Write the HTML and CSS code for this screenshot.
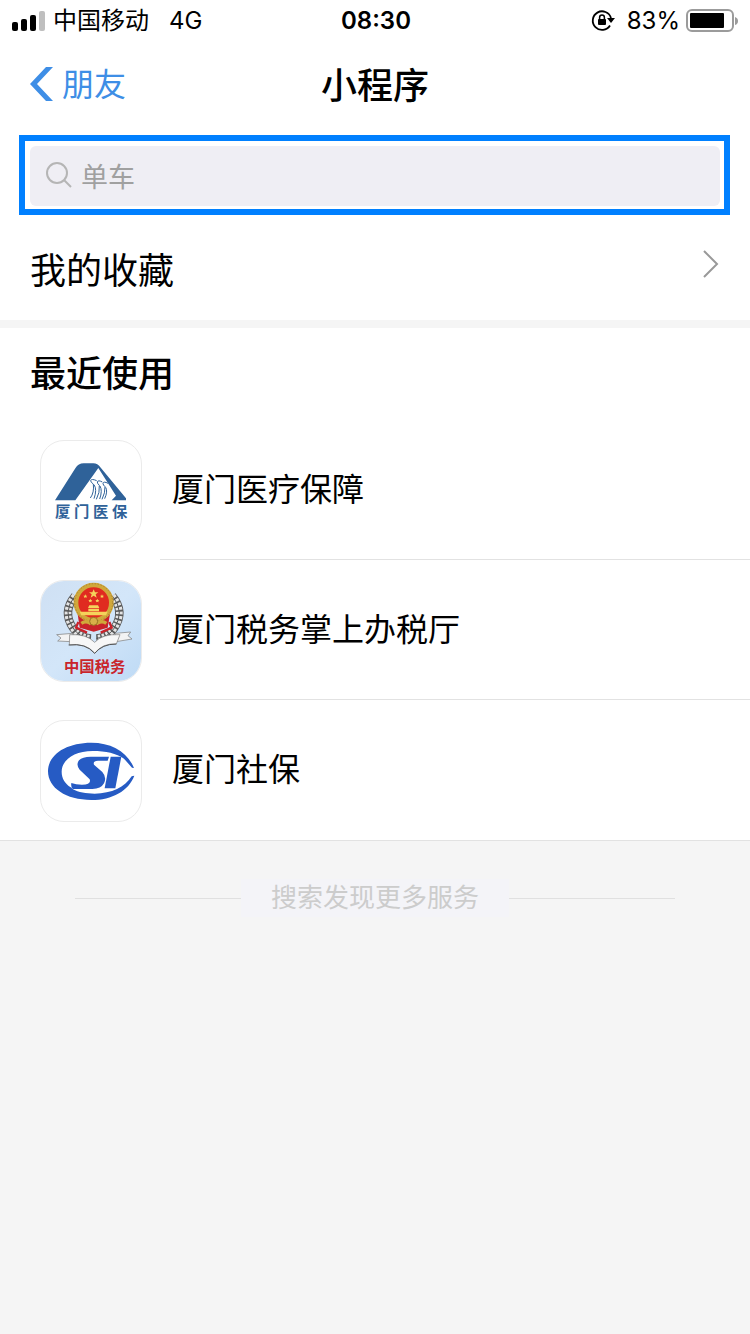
FILE: index.html
```html
<!DOCTYPE html>
<html lang="zh-CN">

<head>
    <meta charset="UTF-8">
    <meta name="viewport" content="width=device-width, initial-scale=1.0">
    <title>小程序</title>
    <link rel="stylesheet" href="styles.css">
</head>

<body>
    <div class="status-bar">
        <div class="status-left">
            <svg class="signal" viewBox="0 0 33 20" aria-hidden="true">
                <rect x="0" y="11" width="6" height="9" rx="2" />
                <rect x="9" y="8" width="6" height="12" rx="2" />
                <rect x="18" y="4" width="6" height="16" rx="2" />
                <rect x="27" y="0" width="6" height="20" rx="2" fill="#bfbfbf" />
            </svg>
            <span>中国移动</span>
            <span class="network">4G</span>
        </div>
        <span class="time">08:30</span>
        <div class="status-right">
            <svg class="lock" viewBox="0 0 24 24" aria-hidden="true">
                <path d="M19 16.500A9.300 9.300 0 1 1 20 9" fill="none" stroke="#000" stroke-width="1.800" />
                <path d="M16 9h8l-4 5z" />
                <rect x="7" y="10" width="8" height="6" rx="1" />
                <path d="M8.600 11V8.500a2.400 2.400 0 0 1 4.800 0v2.500" fill="none" stroke="#000" stroke-width="1.500" />
            </svg>
            <span>83%</span>
            <svg class="battery" viewBox="0 0 54 24" aria-hidden="true">
                <rect x="1" y="1" width="46" height="21" rx="5" fill="none" stroke="#9b9b9b" stroke-width="2" />
                <rect x="4" y="4" width="34" height="15" rx="1" />
                <path d="M49 8q3 1 3 4t-3 4z" fill="#9b9b9b" />
            </svg>
        </div>
    </div>

    <header class="nav">
        <a class="back" href="#">
            <svg viewBox="0 0 24 34" aria-hidden="true">
                <path d="M16 0h7L7 17l16 17h-7L0 17z" fill="#3e8ee6" />
            </svg>
            <span>朋友</span>
        </a>
        <h1>小程序</h1>
    </header>

    <form class="search" role="search">
        <label class="search-box">
            <svg viewBox="0 0 28 28" aria-hidden="true">
                <circle cx="12" cy="12" r="10" />
                <path d="M19 19l7 7" />
            </svg>
            <input type="search" placeholder="单车" aria-label="搜索">
        </label>
    </form>

    <a class="favorites" href="#">
        <span>我的收藏</span>
        <svg viewBox="0 0 18 30" aria-hidden="true">
            <path d="M2 2l13 13L2 28" />
        </svg>
    </a>

    <section class="recent">
        <h2>最近使用</h2>
        <ul>
            <li>
                <a href="#">
                    <svg class="app-icon" viewBox="33 33 300 300" aria-hidden="true">
                        <path d="M75 211l61-96q9-15 25-15h29q13 0 21 12l77 93v6h-43l13-14-53-83-69 97z" fill="#2f6299" />
                        <g fill="none" stroke="#2f6299" stroke-width="3">
                            <path d="M200 152q-16-7-18 0 0 5 8 10 3 26-9 42" />
                            <path d="M217 156q-13-7-15 0 0 5 6 10 2 22-9 42" />
                            <path d="M234 160q-13-7-15 0 0 5 6 10 1 18-9 38" />
                            <path d="M192 164q10 14 0 42M210 168q8 14-1 39M227 172q7 12-3 34" />
                        </g>
                        <text class="logo-medical" x="98" y="260">厦</text>
                        <text class="logo-medical" x="155" y="260">门</text>
                        <text class="logo-medical" x="212" y="260">医</text>
                        <text class="logo-medical" x="269" y="260">保</text>
                    </svg>
                    <span>厦门医疗保障</span>
                </a>
            </li>
            <li>
                <a href="#">
                    <svg class="app-icon" viewBox="33 33 300 300" aria-hidden="true">
                        <defs>
                            <linearGradient id="sky" x1="0" y1="0" x2="1" y2="1">
                                <stop offset="0" stop-color="#cfe0f3" />
                                <stop offset="0.500" stop-color="#d3e6f9" />
                                <stop offset="1" stop-color="#bedaf5" />
                            </linearGradient>
                        </defs>
                        <rect x="30" y="30" width="306" height="306" fill="url(#sky)" />
                        <!-- wheat wreath -->
                        <g fill="none">
                            <path d="M135 78Q96 125 129 174q19 29 54 31M247 78q39 47 6 96-19 29-54 31" stroke="#5c5c5c" stroke-width="25" />
                            <path d="M135 78Q96 125 129 174q19 29 54 31M247 78q39 47 6 96-19 29-54 31" stroke="#e4e4e4" stroke-width="20" stroke-dasharray="8 5" />
                            <path d="M135 78Q96 125 129 174q19 29 54 31M247 78q39 47 6 96-19 29-54 31" stroke="#555" stroke-width="3" />
                        </g>
                        <!-- national emblem -->
                        <path d="M143 132h97l-7 41-42 12-42-12z" fill="#c9222a" />
                        <circle cx="191" cy="98" r="53" fill="#e02b20" stroke="#d0a83b" stroke-width="14" />
                        <circle cx="191" cy="98" r="57" fill="none" stroke="#a88233" stroke-width="3" stroke-dasharray="4 5" />
                        <path d="M191 58l4 9h10l-8 6 3 10-9-6-9 6 3-10-8-6h10z" fill="#f5d35b" />
                        <g fill="#f5d35b">
                            <path d="M166 73l2 4h4l-3 3 1 4-4-2-4 2 1-4-3-3h4z" />
                            <path d="M216 73l2 4h4l-3 3 1 4-4-2-4 2 1-4-3-3h4z" />
                            <path d="M181 86l2 4h4l-3 3 1 4-4-2-4 2 1-4-3-3h4z" />
                            <path d="M202 86l2 4h4l-3 3 1 4-4-2-4 2 1-4-3-3h4z" />
                            <path d="M178 106h26l4 8h-34z" />
                            <path d="M175 116h32v8h-32z" />
                            <path d="M149 125h84l-5 11h-74z" />
                        </g>
                        <path d="M154 160q14-9 25-1 12-14 24 0 14-8 26 1" fill="none" stroke="#d0a83b" stroke-width="10" />
                        <circle cx="191" cy="154" r="12" fill="#d8b049" stroke="#987322" stroke-width="3" />
                        <path d="M145 156l-7 17 33 15M238 156l7 17-33 15" fill="none" stroke="#c9222a" stroke-width="7" />
                        <!-- ribbon -->
                        <g stroke="#777" stroke-width="2">
                            <path d="M128 190l-48 4 13 10-10 9 40 2zM256 190l46-4-8 11 12 10-48 8z" fill="#f3f3f3" />
                            <path d="M119 194q50-3 75 23 23-26 76-23l-11 28q-42-3-65 28-22-31-76-25z" fill="#f7f7f7" />
                            <path d="M116 225q50-7 78 25 23-28 65-28" fill="none" stroke="#555" stroke-width="3" />
                        </g>
                        <text class="logo-tax" x="194" y="307">中国税务</text>
                    </svg>
                    <span>厦门税务掌上办税厅</span>
                </a>
            </li>
            <li>
                <a href="#">
                    <svg class="app-icon" viewBox="33 33 300 300" aria-hidden="true">
                        <g fill="#265bc4">
                            <path d="M312 174C292 125 244 98 184 98 108 98 54 134 54 184s54 86 130 86c63 0 112-28 129-73l-8 2c-20 32-60 52-111 52-26 0-49-4-65-13l-7-6c-17-11-27-27-27-47 0-35 38-62 93-62 40 0 71 7 94 23l24 27z" />
                            <path d="M237 140l-4 12h-29q-16 0-12 12l25 22q14 16 5 34-9 17-35 17h-58q-7-3-5-18 13 5 32 5 29 0 23-16l-30-29q-12-14-2-28 10-11 35-11z" />
                            <path d="M242 140h32l-18 95h-32z" />
                        </g>
                    </svg>
                    <span>厦门社保</span>
                </a>
            </li>
        </ul>
    </section>

    <footer class="more">
        <a href="#">搜索发现更多服务</a>
    </footer>
</body>

</html>
```
FILE: styles.css
```css
* {
    box-sizing: border-box;
}

body {
    margin: 0;
    background: #f5f5f5;
    color: #000;
    font-family: Inter, "Noto Sans CJK SC", sans-serif;
    font-size: 32px;
}

h1,
h2,
ul {
    margin: 0;
    padding: 0;
}

a {
    color: inherit;
    text-decoration: none;
}

svg {
    display: block;
    flex: none;
}

/* status bar */
.status-bar {
    display: grid;
    grid-template-columns: 1fr auto 1fr;
    align-items: center;
    height: 40px;
    padding: 0 10px 0 12px;
    background: #fff;
    font-size: 24px;
    line-height: 42px;
}

.status-left,
.status-right {
    display: flex;
    align-items: center;
    height: 40px;
}

.status-left {
    gap: 8px;
}

.status-right {
    justify-content: flex-end;
}

.signal {
    width: 33px;
    height: 20px;
}

.network {
    margin-left: 12px;
}

.time {
    font-weight: 600;
}

.lock {
    width: 24px;
    height: 24px;
    margin-right: 12px;
}

.battery {
    width: 54px;
    height: 24px;
    margin-left: 6px;
}

/* title bar */
.nav {
    display: grid;
    grid-template-columns: 1fr auto 1fr;
    align-items: center;
    height: 88px;
    padding: 0 30px;
    background: #fff;
}

.nav h1 {
    padding-bottom: 2px;
    font-size: 36px;
    font-weight: 500;
}

.back {
    display: flex;
    align-items: center;
    gap: 8px;
    color: #3e8ee6;
}

.back span {
    padding-bottom: 4px;
}

.back svg {
    width: 24px;
    height: 34px;
}

/* search */
.search {
    padding: 7px 20px 0 19px;
    background: #fff;
}

.search-box {
    display: flex;
    align-items: center;
    gap: 8px;
    height: 80px;
    padding: 5px 20px;
    border: 6px solid #0080ff;
    background: #fff;
    position: relative;
    isolation: isolate;
}

/* grey field inside the frame */
.search-box::before {
    content: "";
    position: absolute;
    inset: 5px 4px 3px 5px;
    border-radius: 6px;
    background: #efeef4;
    z-index: -1;
}

.search-box svg {
    width: 28px;
    height: 28px;
    fill: none;
    stroke: #b5b5b5;
    stroke-width: 2;
}

.search-box input {
    flex: 1;
    min-width: 0;
    padding: 4px 0 0;
    border: 0;
    outline: 0;
    background: none;
    font: inherit;
    font-size: 27px;
}

.search-box input::placeholder {
    color: #a0a0a0;
}

.favorites {
    display: flex;
    align-items: center;
    justify-content: space-between;
    height: 113px;
    padding: 0 30px 8px;
    border-bottom: 8px solid #f5f5f5;
    background: #fff;
    font-size: 36px;
}

.favorites span {
    padding-top: 8px;
}

.favorites svg {
    width: 18px;
    height: 30px;
    fill: none;
    stroke: #999;
    stroke-width: 2;
}

/* recently used */
.recent {
    border-bottom: 1px solid #e2e2e2;
    background: #fff;
}

.recent h2 {
    height: 92px;
    padding-left: 30px;
    font-size: 36px;
    font-weight: 500;
    line-height: 92px;
}

.recent ul {
    list-style: none;
}

.recent a {
    display: flex;
    align-items: center;
    height: 140px;
    padding: 2px 0 0 40px;
    gap: 18px;
}

.recent a span {
    flex: 1;
    height: 138px;
    padding-left: 12px;
    border-bottom: 1px solid #e2e2e2;
    line-height: 136px;
}

.recent li:last-child span {
    border-bottom: 0;
}

.app-icon {
    width: 102px;
    height: 102px;
    border: 1px solid #ebebeb;
    border-radius: 24px;
}

.logo-medical {
    fill: #2f6299;
    font-size: 46px;
    font-weight: 700;
    text-anchor: middle;
}

.logo-tax {
    fill: #c9252c;
    font-size: 46px;
    font-weight: 700;
    text-anchor: middle;
}

.more {
    display: flex;
    align-items: center;
    padding: 38px 75px;
}

.more::before,
.more::after {
    content: "";
    flex: 1;
    height: 1px;
    background: #e0e0e0;
}

.more a {
    padding: 0 30px;
    background: #f4f4f8;
    color: #ccc;
    font-size: 26px;
    line-height: 38px;
}
```
